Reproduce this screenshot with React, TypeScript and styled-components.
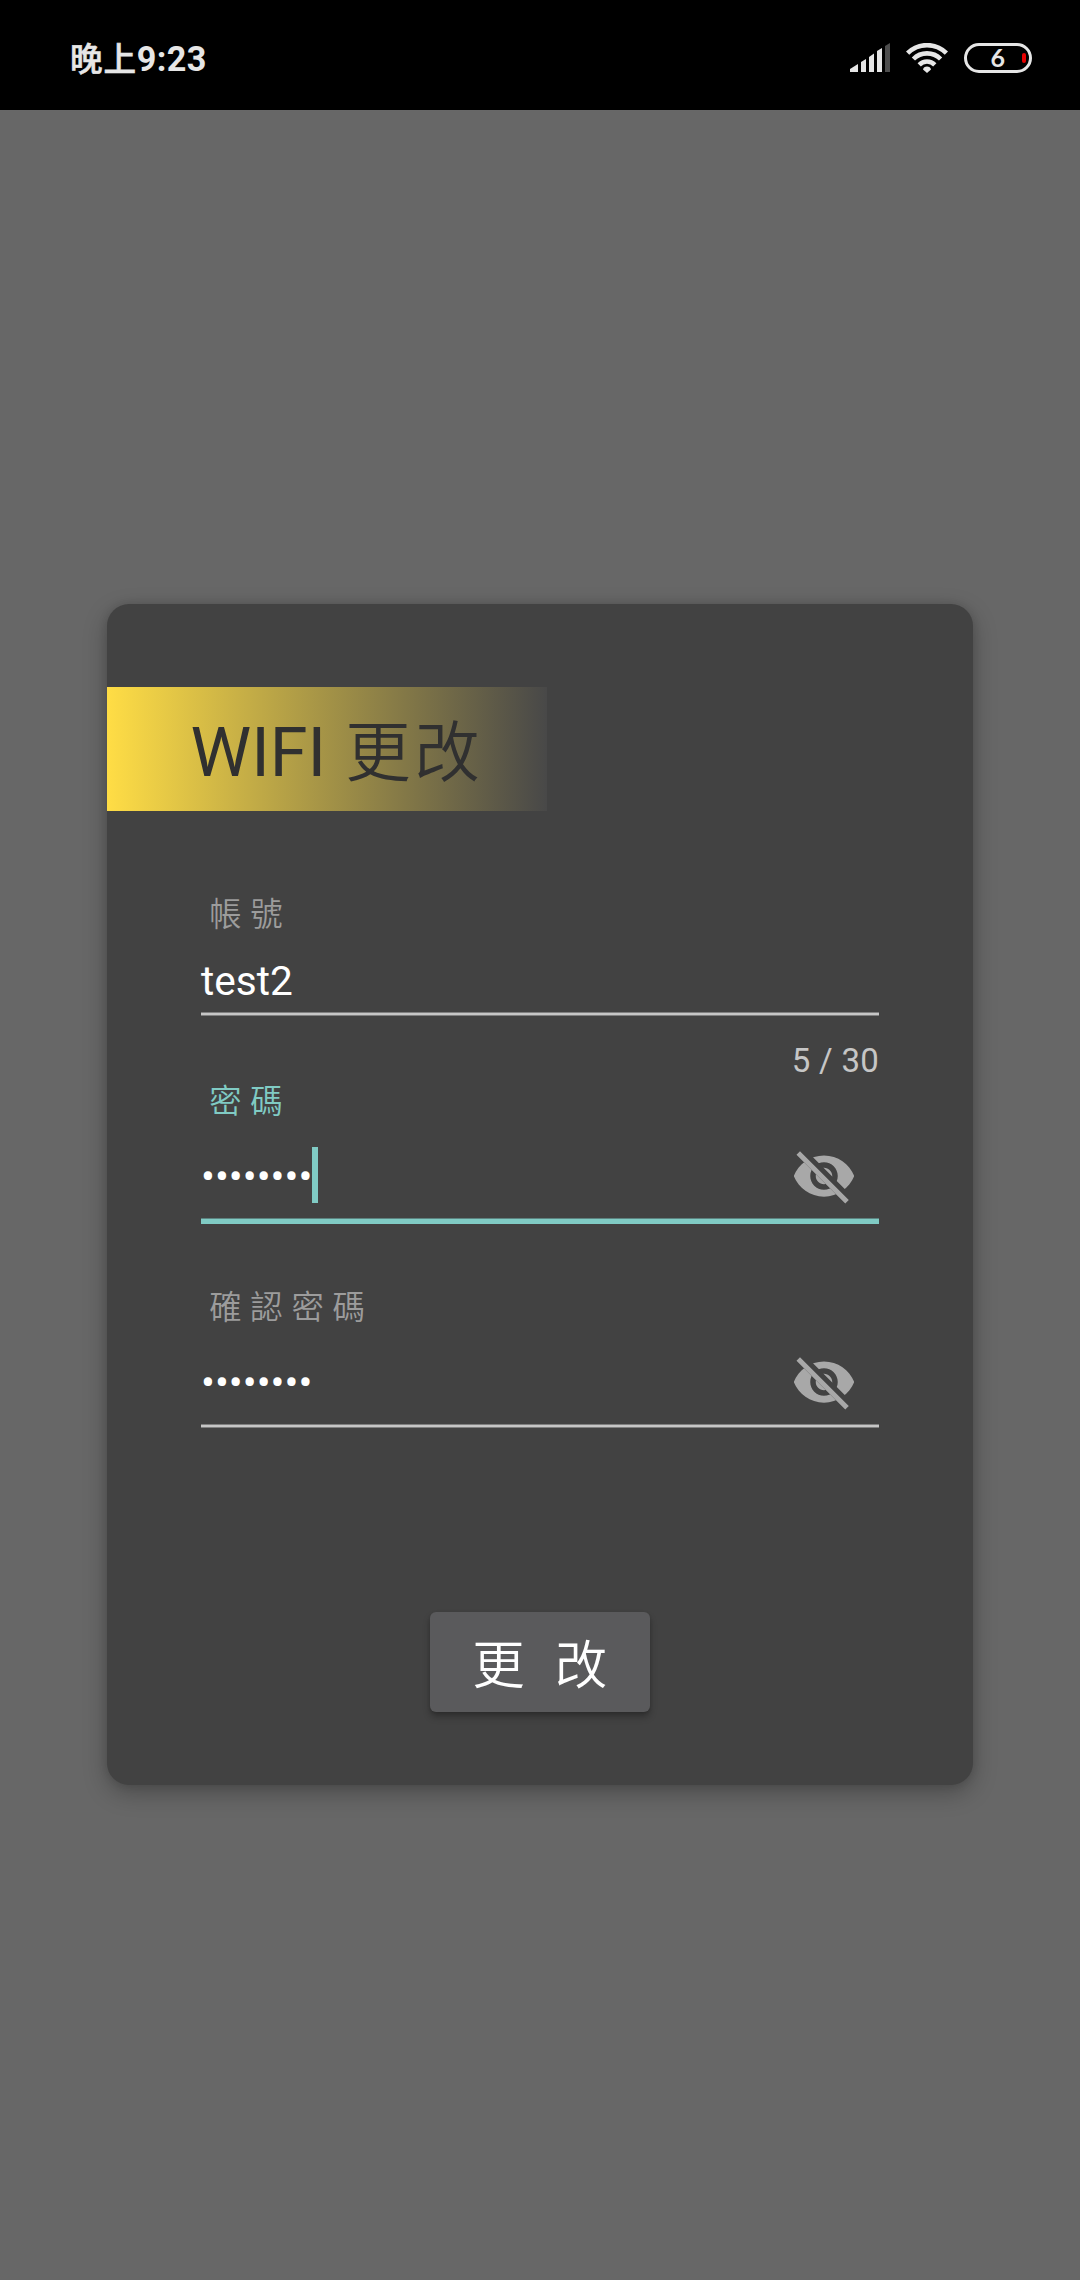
import React from "react";
import styled, { createGlobalStyle } from "styled-components";

const GlobalStyle = createGlobalStyle`
  * { box-sizing: border-box; }
  html, body { margin: 0; padding: 0; background: #676767; }
  body { font-family: Roboto, "Noto Sans CJK TC", sans-serif; }
`;

const Screen = styled.div`
  width: 1080px;
  height: 2280px;
  overflow: hidden;
  display: flex;
  flex-direction: column;
  align-items: center;
  background: #676767;
`;

const StatusBar = styled.header`
  width: 100%;
  height: 110px;
  flex: none;
  display: flex;
  justify-content: space-between;
  padding: 8px 48px 0 70px;
  background: #000;
`;

const Clock = styled.div`
  display: flex;
  font-size: 34.2px;
  font-weight: 700;
  line-height: 103px;
  letter-spacing: 0.4px;
  color: #e6e6e6;
`;

const ClockPeriod = styled.span`
  padding-top: 1px;
  font-size: 32.6px;
  font-weight: 500;
  letter-spacing: 0.8px;
  -webkit-text-stroke: 0.6px #e6e6e6;
`;

const StatusIcons = styled.div`
  display: flex;
  align-items: flex-start;
  padding-top: 35px;
`;

const SignalIcon = styled.svg`
  width: 40px;
  height: 30px;
  margin-right: 16px;
`;

const WifiIcon = styled.svg`
  width: 42px;
  height: 30px;
  margin-right: 16px;
`;

const Battery = styled.div`
  width: 68px;
  height: 30px;
  display: flex;
  align-items: center;
  justify-content: flex-end;
  padding-right: 3px;
  border: 3px solid #e6e6e6;
  border-radius: 15px;
`;

const BatteryLevel = styled.span`
  margin-right: 17px;
  padding-bottom: 2px;
  font-family: Lato, sans-serif;
  font-size: 25px;
  font-weight: 700;
  line-height: 22px;
  color: #e6e6e6;
`;

const BatteryCharge = styled.span`
  width: 4px;
  height: 10px;
  border-radius: 2px;
  background: #e60000;
`;

const Card = styled.main`
  width: 866px;
  height: 1181px;
  margin-top: 494px;
  padding-top: 83px;
  display: flex;
  flex-direction: column;
  align-items: center;
  background: #424242;
  border-radius: 22px;
  box-shadow: 0 8px 23px rgba(0, 0, 0, 0.27), 0 0 10px rgba(0, 0, 0, 0.12);
`;

const Banner = styled.h1`
  align-self: flex-start;
  width: 440px;
  height: 124px;
  margin: 0;
  padding: 8px 0 0 83.5px;
  display: flex;
  font-size: 68.4px;
  font-weight: 400;
  line-height: 116.5px;
  white-space: pre;
  color: #303030;
  background: linear-gradient(90deg, #ffdd45 0%, #484848 100%);
`;

const BannerHan = styled.span`
  padding: 1px 0 0 2px;
  font-size: 65.5px;
  font-weight: 350;
  letter-spacing: 3.7px;
`;

const Form = styled.form`
  width: 678px;
  display: flex;
  flex-direction: column;
  padding-top: 84px;
`;

const Label = styled.label<{ $active?: boolean }>`
  padding-top: 1px;
  font-size: 32.4px;
  font-weight: 350;
  line-height: 39px;
  letter-spacing: 0.4px;
  white-space: pre;
  color: ${(p) => (p.$active ? "#80cbc4" : "#9c9c9c")};
`;

const TextValue = styled.div`
  height: 77px;
  padding-top: 15px;
  font-size: 40.6px;
  line-height: 62px;
  color: #fff;
`;

const SecretRow = styled.div`
  height: 96px;
  display: flex;
  align-items: center;
  padding: 12px 22px 0 0;
`;

const SecretValue = styled.span`
  padding-top: 3px;
  font-size: 41.25px;
  line-height: 81px;
  color: #fff;
`;

const Caret = styled.span`
  width: 6px;
  height: 56px;
  margin-bottom: 2px;
  background: #80cbc4;
`;

const ToggleIcon = styled.svg`
  width: 66px;
  height: 66px;
  margin-left: auto;
`;

const Underline = styled.div<{ $active?: boolean }>`
  height: ${(p) => (p.$active ? 6 : 4)}px;
  background: ${(p) => (p.$active ? "#80cbc4" : "#c6c6c6")};
  border-top: 1px solid ${(p) => (p.$active ? "#5d8380" : "#808080")};
  border-bottom: ${(p) => (p.$active ? "none" : "1px solid #808080")};
`;

const Counter = styled.div`
  margin: 25px 0 1px;
  font-size: 33px;
  line-height: 40px;
  letter-spacing: 0.25px;
  text-align: right;
  color: #c6c6c6;
`;

const Spacer = styled.div`
  height: 64px;
`;

const SubmitButton = styled.button`
  width: 220px;
  height: 100px;
  margin: 184px 0 0;
  padding: 9px 0 0 1px;
  border: none;
  border-radius: 6px;
  background: #5a5a5c;
  box-shadow: 0 5px 7px rgba(0, 0, 0, 0.28), 0 1px 3px rgba(0, 0, 0, 0.12);
  font-family: inherit;
  font-size: 52.5px;
  font-weight: 350;
  line-height: 91px;
  letter-spacing: 1.5px;
  white-space: pre;
  color: #fff;
`;

function HiddenEye({ id }: { id: string }) {
  return (
    <ToggleIcon viewBox="0 0 24 24" fill="#a8a8a8">
      <clipPath id={id}>
        <path d="M2,4.27 L19.73,22 L22.27,19.46 L4.54,1.73 L4.54,1 L23,1 L23,23 L1,23 L1,4.27 Z" />
      </clipPath>
      <path
        clipPath={`url(#${id})`}
        fillRule="evenodd"
        d="M12,4.5C7,4.5 2.73,7.61 1,12C2.73,16.39 7,19.5 12,19.5C17,19.5 21.27,16.39 23,12C21.27,7.61 17,4.5 12,4.5Z M12,17C9.24,17 7,14.76 7,12C7,9.24 9.24,7 12,7C14.76,7 17,9.24 17,12C17,14.76 14.76,17 12,17Z M12,9C10.34,9 9,10.34 9,12C9,13.66 10.34,15 12,15C13.66,15 15,13.66 15,12C15,10.34 13.66,9 12,9Z"
      />
      <path d="M3.27,4.27L19.74,20.74" stroke="#a8a8a8" strokeWidth="1.8" strokeLinecap="square" />
    </ToggleIcon>
  );
}

function SecretField({ id, label, active }: { id: string; label: string; active?: boolean }) {
  return (
    <>
      <Label $active={active}>{label}</Label>
      <SecretRow>
        <SecretValue>••••••••</SecretValue>
        {active && <Caret />}
        <HiddenEye id={id} />
      </SecretRow>
      <Underline $active={active} />
    </>
  );
}

export default function App() {
  return (
    <>
      <GlobalStyle />
      <Screen>
        <StatusBar>
          <Clock>
            <ClockPeriod>晚上</ClockPeriod>
            <span>9:23</span>
          </Clock>
          <StatusIcons>
            <SignalIcon viewBox="0 0 40 30" fill="#e6e6e6">
              <path d="M0 29V26L8 21V29Z" />
              <path d="M11 29V19L16 16V29Z" />
              <path d="M19 29V14L24 10.5V29Z" />
              <path d="M27 29V8L32 5V29Z" />
              <path d="M35 29V3L40 0V29Z" fill="#4d4d4d" />
            </SignalIcon>
            <WifiIcon viewBox="0 0 42 30" fill="none" stroke="#e6e6e6" strokeWidth="4.6">
              <path d="M1.6 10.2A27.4 27.4 0 0 1 40.4 10.2" />
              <path d="M7.4 16A19.2 19.2 0 0 1 34.6 16" />
              <path d="M13.2 21.8A11 11 0 0 1 28.8 21.8" />
              <path d="M21 30L17 26.6C17.2 24.6 19 23.6 21 23.6C23 23.6 24.8 24.6 25 26.6Z" fill="#e6e6e6" stroke="none" />
            </WifiIcon>
            <Battery>
              <BatteryLevel>6</BatteryLevel>
              <BatteryCharge />
            </Battery>
          </StatusIcons>
        </StatusBar>
        <Card>
          <Banner>
            {"WIFI "}
            <BannerHan>更改</BannerHan>
          </Banner>
          <Form>
            <Label>{" 帳 號"}</Label>
            <TextValue>test2</TextValue>
            <Underline />
            <Counter>5 / 30</Counter>
            <SecretField id="eye-password" label=" 密 碼" active />
            <Spacer />
            <SecretField id="eye-confirm" label=" 確 認 密 碼" />
          </Form>
          <SubmitButton type="button">{"更  改"}</SubmitButton>
        </Card>
      </Screen>
    </>
  );
}
